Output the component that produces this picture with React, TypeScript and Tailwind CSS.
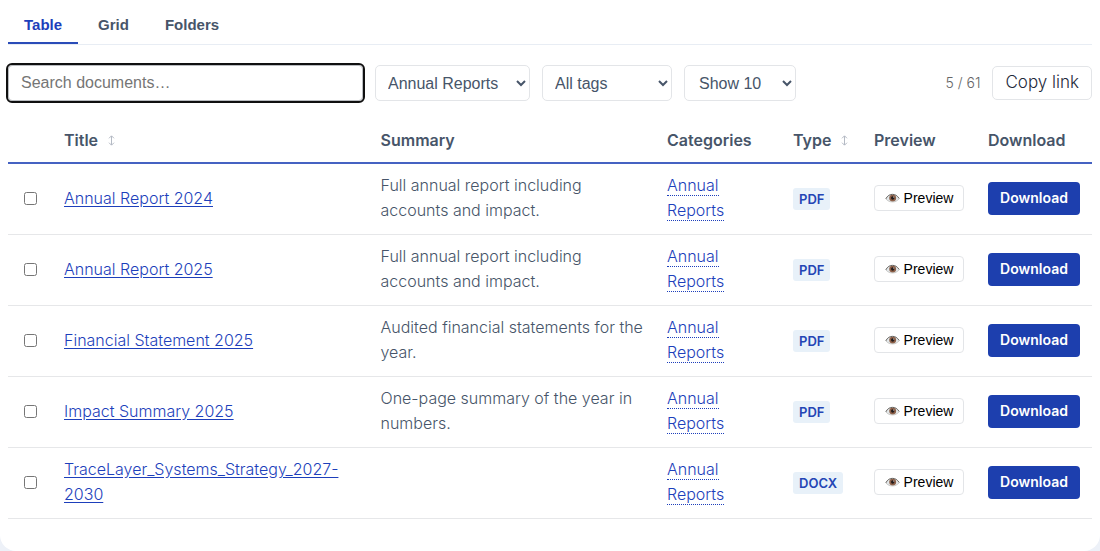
import { useState } from "react";

const documents = [
  { title: "Annual Report 2024", summary: "Full annual report including accounts and impact.", type: "PDF" },
  { title: "Annual Report 2025", summary: "Full annual report including accounts and impact.", type: "PDF" },
  { title: "Financial Statement 2025", summary: "Audited financial statements for the year.", type: "PDF" },
  { title: "Impact Summary 2025", summary: "One-page summary of the year in numbers.", type: "PDF" },
  { title: "TraceLayer_Systems_Strategy_2027-2030", summary: "", type: "DOCX" },
];

const tabs = ["Table", "Grid", "Folders"];

const selectClass =
  "h-9 rounded-[5px] border border-[#e3e5e8] bg-white font-['Liberation_Sans',sans-serif] text-base text-[#475569]";

function SortIcon() {
  return (
    <svg width="7" height="11" viewBox="0 0 7 11" fill="none" stroke="#b4bac4" aria-hidden="true">
      <path d="M3.5 1v9M1 3.3 3.5.8 6 3.3M1 7.7l2.5 2.5L6 7.7" />
    </svg>
  );
}

function EyeIcon() {
  return (
    <svg width="15" height="12" viewBox="0 0 16 12" aria-hidden="true">
      <path d="M1 7C3 3.5 5.3 2.4 8 2.4s5 1.200 7 4.200c-2 2.400-4 3.600-7 3.600S3 9.200 1 7z" fill="#e3e8ea" />
      <circle cx="8.200" cy="6.100" r="3.700" fill="#8d6048" />
      <circle cx="8.200" cy="6" r="1.800" fill="#201a1a" />
      <circle cx="9.300" cy="4.900" r=".6" fill="#fff" />
      <path d="M.8 7C2.700 3.300 5.300 2.100 8 2.100s5 1.200 7.200 4.500" fill="none" stroke="#5b5753" strokeWidth="1" />
      <path d="M1 7.100c2 2.200 4.200 3.100 7 3.100s4.800-.9 7-3.300" fill="none" stroke="#a9a5a0" strokeWidth=".6" />
    </svg>
  );
}

export default function App() {
  const [activeTab, setActiveTab] = useState("Table");
  const [search, setSearch] = useState("");

  return (
    <div className="min-h-screen bg-[#edf1f8] font-['Inter',sans-serif]">
      <main className="min-h-screen rounded-b-2xl bg-white px-2 pt-1">
        {/* View tabs */}
        <div role="tablist" className="flex gap-1 border-b border-[#e8edf4] font-['Liberation_Sans',sans-serif]">
          {tabs.map((tab) => (
            <button
              key={tab}
              role="tab"
              aria-selected={activeTab === tab}
              onClick={() => setActiveTab(tab)}
              className={
                activeTab === tab
                  ? "h-10 border-b-2 border-[#2a4cb8] px-4 pt-1 text-[15px] font-bold text-[#1d3fbb]"
                  : "h-10 border-b-2 border-transparent px-4 pt-1 text-[15px] font-bold text-[#475569]"
              }
            >
              {tab}
            </button>
          ))}
        </div>

        {/* Filters */}
        <div className="mt-5 flex items-center gap-3">
          <input
            type="search"
            aria-label="Search documents"
            placeholder="Search documents…"
            value={search}
            onChange={(e) => setSearch(e.target.value)}
            className="h-9 max-w-[355px] flex-1 rounded-[4px] border border-[#b9bcc0] px-3 font-['Liberation_Sans',sans-serif] text-base text-[#475569] outline-2 outline-[#101010] placeholder:text-[#757575]"
          />
          <select aria-label="Category" className={`${selectClass} w-[155px] pl-2`}>
            <option>Annual Reports</option>
          </select>
          <select aria-label="Tag" className={`${selectClass} w-[130px] pl-2`}>
            <option>All tags</option>
          </select>
          <select aria-label="Page size" className={`${selectClass} w-[112px] pl-2.5`}>
            <option>Show 10</option>
            <option>Show 25</option>
          </select>
          <span className="ml-auto text-sm font-light text-[#666]">5 / 61</span>
          <button className="h-[34px] rounded-[5px] border border-[#e3e5e8] px-3 text-[17px] font-light text-[#1e293b]">
            Copy link
          </button>
        </div>

        {/* Documents */}
        <table className="mt-4 w-full table-fixed border-separate border-spacing-0 text-left text-base leading-[25px]">
          <thead>
            <tr className="text-[#475569] [&>th]:border-b-2 [&>th]:border-[#4562c2] [&>th]:px-3 [&>th]:pt-[11px] [&>th]:pb-[9px] [&>th]:font-semibold">
              <th className="w-11" aria-label="Select" />
              <th className="w-[29.2%]">
                <button className="flex items-center gap-2.5">
                  Title <SortIcon />
                </button>
              </th>
              <th>Summary</th>
              <th className="w-[126px]">Categories</th>
              <th className="w-[81px]">
                <button className="flex items-center gap-2.5">
                  Type <SortIcon />
                </button>
              </th>
              <th className="w-[114px]">Preview</th>
              <th className="w-[116px]">Download</th>
            </tr>
          </thead>
          <tbody>
            {documents.map((doc) => (
              <tr
                key={doc.title}
                className="[&>td]:h-[71px] [&>td]:border-b [&>td]:border-[#e6e7e9] [&>td]:px-3 [&>td]:pt-[9px] [&>td]:pb-[11px]"
              >
                <td>
                  <input type="checkbox" aria-label={`Select ${doc.title}`} className="mx-1 block size-[13px]" />
                </td>
                <td>
                  <a href="#" className="font-light text-[#1d3fbb] underline underline-offset-2">
                    {doc.title}
                  </a>
                </td>
                <td className="font-light text-[#475569]">{doc.summary}</td>
                <td>
                  <a href="#" className="border-b border-dotted border-[#1d3fbb] font-light text-[#1d3fbb]">
                    Annual Reports
                  </a>
                </td>
                <td>
                  <span className="inline-block rounded-[3px] bg-[#e8f1f9] px-1.5 text-[13px] leading-[22px] font-semibold text-[#2445b5]">
                    {doc.type}
                  </span>
                </td>
                <td>
                  <button className="flex h-[26px] w-full items-center justify-center gap-1 rounded-[4px] border border-[#e3e5e8] font-['Liberation_Sans',sans-serif] text-sm text-black">
                    <EyeIcon /> Preview
                  </button>
                </td>
                <td>
                  <a
                    href="#"
                    className="block rounded-[4px] bg-[#1d3fae] pt-1 pb-1.5 text-center text-sm leading-[23px] font-semibold text-white"
                  >
                    Download
                  </a>
                </td>
              </tr>
            ))}
          </tbody>
        </table>
      </main>
    </div>
  );
}
